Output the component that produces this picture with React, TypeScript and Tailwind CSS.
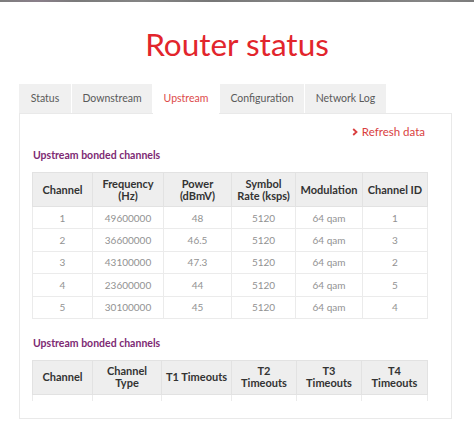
import React from "react";

const t1Head = [
  ["Channel"],
  ["Frequency", "(Hz)"],
  ["Power", "(dBmV)"],
  ["Symbol", "Rate (ksps)"],
  ["Modulation"],
  ["Channel ID"],
];
const t1Widths = [60, 71, 68, 64, 67, 65];
const t1Rows = [
  ["1", "49600000", "48", "5120", "64 qam", "1"],
  ["2", "36600000", "46.5", "5120", "64 qam", "3"],
  ["3", "43100000", "47.3", "5120", "64 qam", "2"],
  ["4", "23600000", "44", "5120", "64 qam", "5"],
  ["5", "30100000", "45", "5120", "64 qam", "4"],
];

const t2Head = [
  ["Channel"],
  ["Channel", "Type"],
  ["T1 Timeouts"],
  ["T2", "Timeouts"],
  ["T3", "Timeouts"],
  ["T4", "Timeouts"],
];
const t2Widths = [60, 69, 70, 65, 65, 66];
const t2Rows = [
  ["1", "ATDMA", "0", "0", "0", "0"],
  ["2", "ATDMA", "0", "0", "0", "0"],
];

function DataTable({
  head,
  widths,
  rows,
}: {
  head: string[][];
  widths: number[];
  rows: string[][];
}) {
  return (
    <table className="w-[395px] border-collapse table-fixed">
      <colgroup>
        {widths.map((w, i) => (
          <col key={i} style={{ width: w }} />
        ))}
      </colgroup>
      <thead>
        <tr className="h-[34px] bg-[#eeeeee]">
          {head.map((lines, i) => (
            <th
              key={i}
              className="border border-[#e2e2e2] px-0 text-center align-middle text-[11px] leading-[12px] font-bold text-[#333333]"
            >
              {lines.map((l, j) => (
                <div key={j}>{l}</div>
              ))}
            </th>
          ))}
        </tr>
      </thead>
      <tbody>
        {rows.map((r, i) => (
          <tr key={i} className="h-[22.4px]">
            {r.map((c, j) => (
              <td
                key={j}
                className="border border-[#ebebeb] text-center align-middle text-[10px] leading-[12px] text-[#929292]"
              >
                {c}
              </td>
            ))}
          </tr>
        ))}
      </tbody>
    </table>
  );
}

const tabs = [
  { label: "Status", w: "w-[52px]" },
  { label: "Downstream", w: "w-[80px]" },
  { label: "Upstream", w: "w-[66px]", active: true },
  { label: "Configuration", w: "w-[84px]" },
  { label: "Network Log", w: "w-[81px]" },
];

export default function App() {
  return (
    <div className="w-[474px] h-[441px] overflow-hidden bg-white font-['Lato',sans-serif]">
      <div className="h-[2px] bg-[linear-gradient(90deg,#7d7d7d_0%,#8a7f8a_8%,#7a7a7a_16%,#858585_30%,#777777_45%,#838383_60%,#7a7a7a_75%,#868686_90%,#7c7c7c_100%)]" />
      <div className="h-[82px] pt-[22px] text-center">
        <h1 className="text-[31.5px] leading-[40px] font-normal text-[#e2252c]">
          Router status
        </h1>
      </div>
      <div className="ml-[19px] w-[433px]">
        <div className="flex gap-[1px] h-[29px]">
          {tabs.map((t) => (
            <div
              key={t.label}
              className={`${t.w} flex items-center justify-center text-[10.5px] ${
                t.active
                  ? "bg-white text-[#dd4a4a] relative z-10 -mb-px h-[30px]"
                  : "bg-[#f0f0f0] text-[#5a5a5a]"
              }`}
            >
              {t.label}
            </div>
          ))}
        </div>
        <div className="h-[306px] border border-[#e9e9e9] pl-[12px] pt-[10px]">
          <div className="flex justify-end pr-[26px] h-[16px] items-center">
            <div className="flex items-center gap-[4px] text-[11.5px] leading-[16px] text-[#d93e3e]">
              <svg width="6" height="8" viewBox="0 0 6 8">
                <polyline
                  points="1.2,1 4.5,4 1.2,7"
                  fill="none"
                  stroke="#d93e3e"
                  strokeWidth="1.8"
                />
              </svg>
              <span>Refresh data</span>
            </div>
          </div>
          <div className="mt-[8px] pl-[1px] text-[10.5px] leading-[14px] font-bold text-[#7d2a73]">
            Upstream bonded channels
          </div>
          <div className="mt-[10px]">
            <DataTable head={t1Head} widths={t1Widths} rows={t1Rows} />
          </div>
          <div className="mt-[17px] pl-[1px] text-[10.5px] leading-[14px] font-bold text-[#7d2a73]">
            Upstream bonded channels
          </div>
          <div className="mt-[10px] h-[41px] overflow-hidden">
            <DataTable head={t2Head} widths={t2Widths} rows={t2Rows} />
          </div>
        </div>
      </div>
    </div>
  );
}
